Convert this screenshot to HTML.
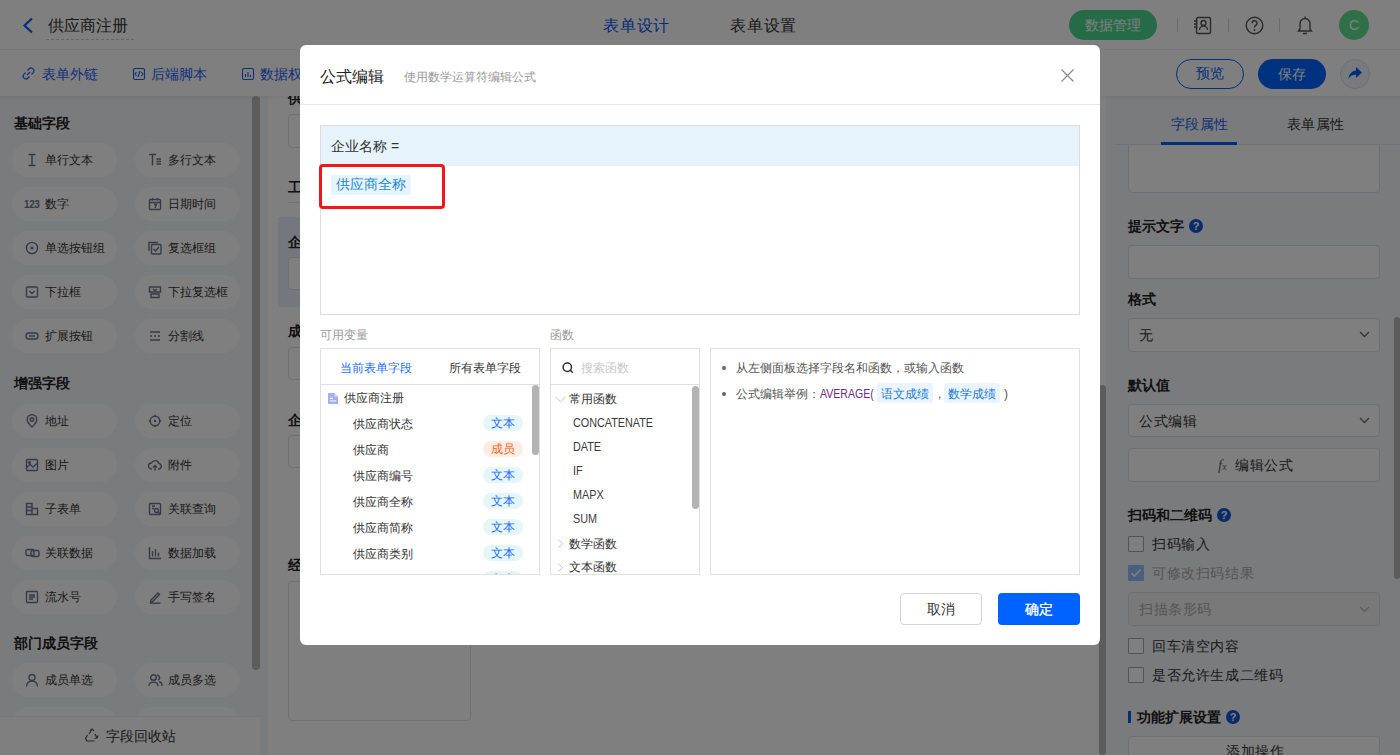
<!DOCTYPE html>
<html><head><meta charset="utf-8"><style>
*{box-sizing:border-box;margin:0;padding:0}
html,body{width:1400px;height:755px;overflow:hidden}
body{font-family:"Liberation Sans",sans-serif;font-size:14px;color:#333;background:#fff;position:relative}
.a,.m{position:absolute;white-space:nowrap}
svg{display:block}
#hdr{position:absolute;left:0;top:0;width:1400px;height:50px;background:#fff;border-bottom:1px solid #eef0f3}
#tb{position:absolute;left:0;top:50px;width:1400px;height:46px;background:#fff}
#tbs{position:absolute;left:0;top:96px;width:1400px;height:4px;background:linear-gradient(rgba(0,0,0,.05),rgba(0,0,0,0))}
#lp{position:absolute;left:0;top:96px;width:260px;height:659px;background:#f4f6fa}
#gut{position:absolute;left:260px;top:96px;width:8px;height:659px;background:#f4f6fa}
#cv{position:absolute;left:268px;top:96px;width:831px;height:659px;background:#fff}
#rp{position:absolute;left:1106px;top:96px;width:294px;height:659px;background:#f4f6fa}
.pill{position:absolute;width:105px;height:34px;border-radius:17px;background:#fff}
.pill svg{position:absolute;left:13px;top:10px}
.pill .t{position:absolute;left:33px;top:0;line-height:35px;font-size:12px;color:#333;white-space:nowrap}
.grp{position:absolute;left:14px;font-size:14px;line-height:18px;font-weight:bold;color:#222;white-space:nowrap}
.lbl{position:absolute;font-size:14px;line-height:18px;font-weight:bold;color:#222;white-space:nowrap}
.inp{position:absolute;border:1px solid #dcdfe4;border-radius:4px;background:#fff}
.hq{position:absolute;width:14px;height:14px;border-radius:7px;background:#1557d6;color:#fff;font-size:11px;line-height:14px;text-align:center;font-weight:bold}
.cb{position:absolute;left:1128px;width:16px;height:16px;border:1px solid #a3a7b3;border-radius:1px;background:#fff}
#mask{position:absolute;left:0;top:0;width:1400px;height:755px;background:rgba(0,0,0,.5)}
#modal{position:absolute;left:300px;top:45px;width:800px;height:600px;background:#fff;border-radius:6px}
.box{position:absolute;border:1px solid #e2e2e2;background:#fff}
</style></head><body>
<div id="lp"></div><div id="gut"></div><div id="cv"></div><div id="rp"></div>
<div class="grp" style="top:114px">基础字段</div>
<div class="pill" style="left:12px;top:143px"><svg width="14" height="14" viewBox="0 0 14 14" fill="none" stroke="#6d7589" stroke-width="1.4"><path d="M3.5 1.5H10.5M3.5 12.5H10.5M7 1.5V12.5" stroke-width="1.5"/></svg><div class="t">单行文本</div></div>
<div class="pill" style="left:135px;top:143px"><svg width="14" height="14" viewBox="0 0 14 14" fill="none" stroke="#6d7589" stroke-width="1.4"><path d="M1 1.5H8M4.5 1.5V12.5M8.5 6H13M8.5 8.5H13M8.5 11H13" stroke-width="1.5"/></svg><div class="t">多行文本</div></div>
<div class="pill" style="left:12px;top:187px"><svg width="17" height="14" viewBox="0 0 17 14" style="left:12px"><text x="0" y="10.5" font-family="Liberation Sans" font-size="10" font-weight="bold" letter-spacing="-0.4" fill="#6d7589">123</text></svg><div class="t">数字</div></div>
<div class="pill" style="left:135px;top:187px"><svg width="14" height="14" viewBox="0 0 14 14" fill="none" stroke="#6d7589" stroke-width="1.4"><rect x="1.5" y="2.5" width="11" height="10" rx="1"/><path d="M1.5 5.5H12.5M4.5 1V3.5M9.5 1V3.5M6 7.5H8.5L7 11"/></svg><div class="t">日期时间</div></div>
<div class="pill" style="left:12px;top:231px"><svg width="14" height="14" viewBox="0 0 14 14" fill="none" stroke="#6d7589" stroke-width="1.4"><circle cx="7" cy="7" r="5.6"/><circle cx="7" cy="7" r="1.6" fill="#6d7589" stroke="none"/></svg><div class="t">单选按钮组</div></div>
<div class="pill" style="left:135px;top:231px"><svg width="14" height="14" viewBox="0 0 14 14" fill="none" stroke="#6d7589" stroke-width="1.4"><path d="M1 10V1.5H10"/><rect x="3.5" y="3.5" width="9.5" height="9.5" rx="1"/><path d="M5.5 8L7.6 10L11 6"/></svg><div class="t">复选框组</div></div>
<div class="pill" style="left:12px;top:275px"><svg width="14" height="14" viewBox="0 0 14 14" fill="none" stroke="#6d7589" stroke-width="1.4"><rect x="1.5" y="2" width="11" height="10" rx="1"/><path d="M4.5 6L7 8.5L9.5 6"/></svg><div class="t">下拉框</div></div>
<div class="pill" style="left:135px;top:275px"><svg width="14" height="14" viewBox="0 0 14 14" fill="none" stroke="#6d7589" stroke-width="1.4"><path d="M1.5 2H12.5V7H1.5Z M3 9H11V12.5H3Z"/><path d="M5 4L7 5.5L9 4"/></svg><div class="t">下拉复选框</div></div>
<div class="pill" style="left:12px;top:319px"><svg width="14" height="14" viewBox="0 0 14 14" fill="none" stroke="#6d7589" stroke-width="1.4"><rect x="1" y="4" width="12" height="6" rx="3"/><path d="M4 7H10"/></svg><div class="t">扩展按钮</div></div>
<div class="pill" style="left:135px;top:319px"><svg width="14" height="14" viewBox="0 0 14 14" fill="none" stroke="#6d7589" stroke-width="1.4"><path d="M2 3H12M2 11H12M2 7H4M6 7H8M10 7H12"/></svg><div class="t">分割线</div></div>
<div class="grp" style="top:374px">增强字段</div>
<div class="pill" style="left:12px;top:404px"><svg width="14" height="14" viewBox="0 0 14 14" fill="none" stroke="#6d7589" stroke-width="1.4"><path d="M7 13C7 13 2.2 8.5 2.2 5.5A4.8 4.8 0 0 1 11.8 5.5C11.8 8.5 7 13 7 13Z"/><circle cx="7" cy="5.5" r="1.8"/></svg><div class="t">地址</div></div>
<div class="pill" style="left:135px;top:404px"><svg width="14" height="14" viewBox="0 0 14 14" fill="none" stroke="#6d7589" stroke-width="1.4"><circle cx="7" cy="7" r="4.8"/><circle cx="7" cy="7" r="1.2" fill="#6d7589" stroke="none"/><path d="M7 0.8V3M7 11V13.2M0.8 7H3M11 7H13.2"/></svg><div class="t">定位</div></div>
<div class="pill" style="left:12px;top:448px"><svg width="14" height="14" viewBox="0 0 14 14" fill="none" stroke="#6d7589" stroke-width="1.4"><rect x="1.5" y="1.5" width="11" height="11" rx="1"/><path d="M1.5 9.5L5 6.5L8 9L12.5 5"/><circle cx="4.5" cy="4.5" r="0.9"/></svg><div class="t">图片</div></div>
<div class="pill" style="left:135px;top:448px"><svg width="14" height="14" viewBox="0 0 14 14" fill="none" stroke="#6d7589" stroke-width="1.4"><path d="M4 11H3.5A3 3 0 0 1 3.5 5A4 4 0 0 1 11 5.5A2.8 2.8 0 0 1 11 11H10"/><path d="M7 12.5V7.5M5 9.5L7 7.5L9 9.5"/></svg><div class="t">附件</div></div>
<div class="pill" style="left:12px;top:492px"><svg width="14" height="14" viewBox="0 0 14 14" fill="none" stroke="#6d7589" stroke-width="1.4"><path d="M1.5 1.5H7V12.5H1.5ZM1.5 5H7M1.5 8.5H7M7 6.5H12.5V12.5H7"/></svg><div class="t">子表单</div></div>
<div class="pill" style="left:135px;top:492px"><svg width="14" height="14" viewBox="0 0 14 14" fill="none" stroke="#6d7589" stroke-width="1.4"><rect x="1.5" y="1.5" width="11" height="11" rx="1"/><path d="M4 4H7M4 6.5H6"/><circle cx="8.5" cy="8.5" r="2"/><path d="M10 10L12 12"/></svg><div class="t">关联查询</div></div>
<div class="pill" style="left:12px;top:536px"><svg width="15" height="14" viewBox="0 0 15 14" fill="none" stroke="#6d7589" stroke-width="1.4"><rect x="1" y="3.5" width="8" height="6" rx="1.5"/><rect x="6" y="4.5" width="8" height="6" rx="1.5"/></svg><div class="t">关联数据</div></div>
<div class="pill" style="left:135px;top:536px"><svg width="14" height="14" viewBox="0 0 14 14" fill="none" stroke="#6d7589" stroke-width="1.4"><path d="M1.5 1V12.5H13M4.5 5V10.5M7.5 3V10.5M10.5 6.5V10.5"/></svg><div class="t">数据加载</div></div>
<div class="pill" style="left:12px;top:580px"><svg width="14" height="14" viewBox="0 0 14 14" fill="none" stroke="#6d7589" stroke-width="1.4"><rect x="1.5" y="1.5" width="11" height="11" rx="1"/><path d="M4 5H10M4 7H10M4 9H8"/></svg><div class="t">流水号</div></div>
<div class="pill" style="left:135px;top:580px"><svg width="14" height="14" viewBox="0 0 14 14" fill="none" stroke="#6d7589" stroke-width="1.4"><path d="M3 10L10 3L11.5 4.5L4.5 11.5L2.5 12Z"/><path d="M2 13.2H12.5"/></svg><div class="t">手写签名</div></div>
<div class="grp" style="top:634px">部门成员字段</div>
<div class="pill" style="left:12px;top:663px"><svg width="14" height="14" viewBox="0 0 14 14" fill="none" stroke="#6d7589" stroke-width="1.4"><circle cx="7" cy="4.5" r="3"/><path d="M1.5 13.5A5.5 5.5 0 0 1 12.5 13.5"/></svg><div class="t">成员单选</div></div>
<div class="pill" style="left:135px;top:663px"><svg width="15" height="14" viewBox="0 0 15 14" fill="none" stroke="#6d7589" stroke-width="1.4"><circle cx="5.5" cy="4.5" r="2.8"/><path d="M0.8 13A4.8 4.8 0 0 1 10.2 13"/><path d="M9 2A2.6 2.6 0 0 1 10 7M11 8.5A4.5 4.5 0 0 1 14 13"/></svg><div class="t">成员多选</div></div>
<div class="pill" style="left:12px;top:707px"><svg width="14" height="14" viewBox="0 0 14 14" fill="none" stroke="#6d7589" stroke-width="1.4"><circle cx="7" cy="4.5" r="3"/><path d="M1.5 13.5A5.5 5.5 0 0 1 12.5 13.5"/></svg><div class="t">部门单选</div></div>
<div class="pill" style="left:135px;top:707px"><svg width="15" height="14" viewBox="0 0 15 14" fill="none" stroke="#6d7589" stroke-width="1.4"><circle cx="5.5" cy="4.5" r="2.8"/><path d="M0.8 13A4.8 4.8 0 0 1 10.2 13"/><path d="M9 2A2.6 2.6 0 0 1 10 7M11 8.5A4.5 4.5 0 0 1 14 13"/></svg><div class="t">部门多选</div></div>
<div class="a" style="left:252px;top:96px;width:8px;height:574px;border-radius:4px;background:#b8b8b8"></div>
<div class="a" style="left:0;top:716px;width:260px;height:39px;background:#fff;border-top:1px solid #eceef2"></div>
<svg class="a" style="left:84px;top:728px" width="16" height="15" viewBox="0 0 16 15" fill="none" stroke="#555" stroke-width="1.2"><path d="M6 3L8 1L10 3M8 1L5 6M11 6L13 10M13 10L10.5 10.5M13 10L14 7.5M10.5 13H3L1.5 10.5L3.5 7"/></svg>
<div class="a" style="left:106px;top:727px;font-size:14px;line-height:18px;color:#333">字段回收站</div>
<div class="lbl" style="left:288px;top:89px">供应商状态</div>
<div class="inp" style="left:288px;top:114px;width:400px;height:34px"></div>
<div class="lbl" style="left:288px;top:178px">工商信息</div>
<div class="a" style="left:288px;top:202px;width:790px;height:1px;background:#e5e7eb"></div>
<div class="a" style="left:278px;top:217px;width:810px;height:90px;background:#e9eef8"></div>
<div class="lbl" style="left:288px;top:233px">企业名称</div>
<div class="inp" style="left:288px;top:257px;width:400px;height:33px"></div>
<div class="lbl" style="left:288px;top:322px">成立日期</div>
<div class="inp" style="left:288px;top:347px;width:400px;height:33px"></div>
<div class="lbl" style="left:288px;top:411px">企业类型</div>
<div class="inp" style="left:288px;top:435px;width:400px;height:33px"></div>
<div class="lbl" style="left:288px;top:556px">经营范围</div>
<div class="inp" style="left:288px;top:581px;width:183px;height:140px"></div>
<div class="a" style="left:1099px;top:385px;width:7px;height:370px;border-radius:3.5px;background:#b8b8b8"></div>
<div class="inp" style="left:1128px;top:120px;width:252px;height:73px"></div>
<div class="a" style="left:1106px;top:96px;width:294px;height:48px;background:#f4f6fa"></div>
<div class="a" style="left:1171px;top:115px;font-size:14px;line-height:18px;color:#1a5cf0;letter-spacing:0.4px">字段属性</div>
<div class="a" style="left:1287px;top:115px;font-size:14px;line-height:18px;color:#333;letter-spacing:0.4px">表单属性</div>
<div class="a" style="left:1114px;top:144px;width:286px;height:1px;background:#e3e5ea"></div>
<div class="a" style="left:1161px;top:142px;width:76px;height:3px;background:#0a5cf5"></div>
<div class="lbl" style="left:1128px;top:217px">提示文字</div><div class="hq" style="left:1189px;top:219px">?</div>
<div class="inp" style="left:1128px;top:245px;width:252px;height:34px"></div>
<div class="lbl" style="left:1128px;top:290px">格式</div>
<div class="inp" style="left:1128px;top:318px;width:252px;height:34px"></div><div class="a" style="left:1139px;top:326px;font-size:14px;line-height:18px;color:#333;letter-spacing:0.6px">无</div>
<svg class="a" style="left:1359px;top:331px" width="11" height="7" viewBox="0 0 11 7"><path d="M1 1L5.5 5.5L10 1" stroke="#666" stroke-width="1.3" fill="none"/></svg>
<div class="lbl" style="left:1128px;top:376px">默认值</div>
<div class="inp" style="left:1128px;top:404px;width:252px;height:33px"></div><div class="a" style="left:1139px;top:412px;font-size:14px;line-height:18px;color:#333;letter-spacing:0.6px">公式编辑</div>
<svg class="a" style="left:1359px;top:417px" width="11" height="7" viewBox="0 0 11 7"><path d="M1 1L5.5 5.5L10 1" stroke="#666" stroke-width="1.3" fill="none"/></svg>
<div class="inp" style="left:1128px;top:448px;width:252px;height:34px"></div>
<div class="a" style="left:1218px;top:456px;font-size:15px;line-height:18px;color:#666;font-style:italic;font-family:&quot;Liberation Serif&quot;,serif">f<span style="font-size:10px">x</span></div>
<div class="a" style="left:1235px;top:456px;font-size:14px;line-height:18px;color:#333;letter-spacing:0.6px">编辑公式</div>
<div class="lbl" style="left:1128px;top:506px">扫码和二维码</div><div class="hq" style="left:1217px;top:508px">?</div>
<div class="cb" style="top:536px"></div><div class="a" style="left:1152px;top:535px;font-size:14px;line-height:18px;color:#333;letter-spacing:0.6px">扫码输入</div>
<div class="cb" style="top:565px;background:#90c0ff;border-color:#90c0ff"></div>
<svg class="a" style="left:1130px;top:568px" width="12" height="10" viewBox="0 0 12 10"><path d="M1.5 5L4.5 8L10.5 1.5" stroke="#fff" stroke-width="1.6" fill="none"/></svg>
<div class="a" style="left:1152px;top:564px;font-size:14px;line-height:18px;color:#aaa;letter-spacing:0.6px">可修改扫码结果</div>
<div class="inp" style="left:1128px;top:592px;width:252px;height:34px;background:#f2f3f5"></div><div class="a" style="left:1139px;top:600px;font-size:14px;line-height:18px;color:#aaa;letter-spacing:0.6px">扫描条形码</div>
<svg class="a" style="left:1359px;top:606px" width="11" height="7" viewBox="0 0 11 7"><path d="M1 1L5.5 5.5L10 1" stroke="#bbb" stroke-width="1.3" fill="none"/></svg>
<div class="cb" style="top:638px"></div><div class="a" style="left:1152px;top:637px;font-size:14px;line-height:18px;color:#333;letter-spacing:0.6px">回车清空内容</div>
<div class="cb" style="top:667px"></div><div class="a" style="left:1152px;top:666px;font-size:14px;line-height:18px;color:#333;letter-spacing:0.6px">是否允许生成二维码</div>
<div class="a" style="left:1128px;top:711px;width:3px;height:12px;background:#0a5cf5"></div>
<div class="lbl" style="left:1137px;top:708px">功能扩展设置</div><div class="hq" style="left:1226px;top:710px">?</div>
<div class="inp" style="left:1128px;top:736px;width:252px;height:33px"></div><div class="a" style="left:1226px;top:742px;font-size:14px;line-height:18px;color:#333;letter-spacing:0.6px">添加操作</div>
<div class="a" style="left:1394px;top:317px;width:6px;height:262px;border-radius:3px;background:#b8b8b8"></div>
<div id="hdr"></div><div id="tb"></div><div id="tbs"></div>
<svg class="a" style="left:22px;top:17px" width="12" height="17" viewBox="0 0 12 17"><path d="M10 1.5L2.5 8.5L10 15.5" stroke="#0a5cf5" stroke-width="2.2" fill="none"/></svg>
<div class="a" style="left:48px;top:16px;font-size:16px;line-height:20px;color:#333">供应商注册</div>
<div class="a" style="left:46px;top:39px;width:88px;height:1px;border-top:1px dashed #c8ccd2"></div>
<div class="a" style="left:603px;top:16px;font-size:16px;line-height:20px;color:#0a55f0;letter-spacing:0.8px">表单设计</div>
<div class="a" style="left:730px;top:16px;font-size:16px;line-height:20px;color:#333;letter-spacing:0.8px">表单设置</div>
<div class="a" style="left:1069px;top:10px;width:88px;height:30px;border-radius:15px;background:#4cd690;color:#fff;font-size:14px;line-height:30px;text-align:center">数据管理</div>
<div class="a" style="left:1177px;top:18px;width:1px;height:14px;background:#d5d7dc"></div>
<div class="a" style="left:1228px;top:18px;width:1px;height:14px;background:#d5d7dc"></div>
<div class="a" style="left:1279px;top:18px;width:1px;height:14px;background:#d5d7dc"></div>
<svg class="a" style="left:1193px;top:16px" width="19" height="19" viewBox="0 0 19 19" fill="none" stroke="#555" stroke-width="1.4"><rect x="3.5" y="1.5" width="14" height="16" rx="1.5"/><circle cx="10.5" cy="7" r="2.5"/><path d="M6.5 14A4 4 0 0 1 14.5 14M1 5H4.5M1 8H4.5M1 11H4.5"/></svg>
<svg class="a" style="left:1245px;top:16px" width="19" height="19" viewBox="0 0 19 19" fill="none" stroke="#555" stroke-width="1.4"><circle cx="9.5" cy="9.5" r="8.3"/><path d="M7 7.2A2.5 2.5 0 1 1 10.5 9.5C9.7 9.9 9.5 10.5 9.5 11.5"/><circle cx="9.5" cy="14" r="0.9" fill="#555" stroke="none"/></svg>
<svg class="a" style="left:1297px;top:15px" width="16" height="20" viewBox="0 0 16 20" fill="none" stroke="#555" stroke-width="1.4"><path d="M8 1.5V3M3 14V8.5A5 5 0 0 1 13 8.5V14L14.5 16H1.5L3 14Z M6 18.5H10"/></svg>
<div class="a" style="left:1339px;top:10px;width:30px;height:30px;border-radius:15px;background:#60e090;color:#fff;font-size:14px;line-height:30px;text-align:center">C</div>
<svg class="a" style="left:22px;top:67px" width="13" height="13" viewBox="0 0 13 13" fill="none" stroke="#1d5ef5" stroke-width="1.2"><path d="M5.5 3.5L7 2A2.5 2.5 0 0 1 11 5.8L9.5 7.3M7.5 9.5L6 11A2.5 2.5 0 0 1 2 7.2L3.5 5.7M4.8 8.2L8.2 4.8"/></svg>
<div class="a" style="left:42px;top:65px;font-size:14px;line-height:18px;color:#1d5ef5">表单外链</div>
<svg class="a" style="left:131.5px;top:67px" width="14" height="14" viewBox="0 0 14 14" fill="none" stroke="#1d5ef5" stroke-width="1.1"><rect x="1.5" y="1.5" width="11" height="11" rx="1.5"/><path d="M4.5 5L3 7L4.5 9M9.5 5L11 7L9.5 9M8 4L6 10"/></svg>
<div class="a" style="left:151px;top:65px;font-size:14px;line-height:18px;color:#1d5ef5">后端脚本</div>
<svg class="a" style="left:240.5px;top:67px" width="14" height="14" viewBox="0 0 14 14" fill="none" stroke="#1d5ef5" stroke-width="1.1"><rect x="1.5" y="1.5" width="11" height="11" rx="1.5"/><path d="M4.5 10V7M7 10V5M9.5 10V8"/></svg>
<div class="a" style="left:260px;top:65px;font-size:14px;line-height:18px;color:#1d5ef5">数据权限</div>
<div class="a" style="left:1176px;top:59px;width:68px;height:30px;border-radius:15px;border:1.5px solid #0a5cf5;color:#0a5cf5;font-size:14px;line-height:27px;text-align:center">预览</div>
<div class="a" style="left:1258px;top:59px;width:68px;height:30px;border-radius:15px;background:#0064fe;color:#fff;font-size:14px;line-height:30px;text-align:center">保存</div>
<div class="a" style="left:1340px;top:59px;width:30px;height:30px;border-radius:15px;background:#f2f5fc;border:1px solid #d3dcef"></div>
<svg class="a" style="left:1347px;top:65px" width="16" height="16" viewBox="0 0 16 16"><path d="M9 2L15 7.5L9 13V9.8C5.5 9.8 3 10.8 1.5 14C1.8 9.2 4.5 6 9 5.5Z" fill="#0a5cf5"/></svg>
<div id="mask"></div>
<div id="modal">
  <div class="m" style="left:20px;top:22px;font-size:16px;line-height:20px;color:#222">公式编辑</div>
  <div class="m" style="left:104px;top:24px;font-size:12px;line-height:16px;color:#999">使用数学运算符编辑公式</div>
  <svg class="m" style="left:760px;top:23px" width="15" height="15" viewBox="0 0 15 15"><path d="M1.5 1.5L13.5 13.5M13.5 1.5L1.5 13.5" stroke="#8c8c8c" stroke-width="1.3" fill="none"/></svg>
  <div class="m" style="left:0;top:59px;width:800px;height:1px;background:#e8e8e8"></div>

  <!-- formula editor -->
  <div class="box" style="left:20px;top:80px;width:760px;height:190px;border-color:#dcdcdc"></div>
  <div class="m" style="left:21px;top:81px;width:758px;height:40px;background:#e6f3fd"></div>
  <div class="m" style="left:31px;top:92px;font-size:14px;line-height:18px;color:#333">企业名称 =</div>
  <div class="m" style="left:31px;top:130px;width:80px;height:20px;background:#e8f4fd;border-radius:2px"></div>
  <div class="m" style="left:36px;top:130px;font-size:14px;line-height:18px;color:#1a8ad4">供应商全称</div>
  <div class="m" style="left:19px;top:119px;width:126px;height:45px;border:3px solid #f5141a;border-radius:4px"></div>

  <!-- labels -->
  <div class="m" style="left:20px;top:282px;font-size:12px;line-height:16px;color:#999">可用变量</div>
  <div class="m" style="left:250px;top:282px;font-size:12px;line-height:16px;color:#999">函数</div>

  <!-- variables box -->
  <div class="box" style="left:20px;top:303px;width:220px;height:227px;border-color:#e0e0e0;overflow:hidden">
    <div class="m" style="left:19px;top:11px;font-size:12px;line-height:16px;color:#1f6bff">当前表单字段</div>
    <div class="m" style="left:128px;top:11px;font-size:12px;line-height:16px;color:#333">所有表单字段</div>
    <div class="m" style="left:0;top:35px;width:220px;height:1px;background:#e0e0e0"></div>
    <svg class="m" style="left:7px;top:44px" width="10" height="11" viewBox="0 0 10 11"><path d="M0 0H6.5L10 3.5V11H0Z" fill="#a2b0fb"/><path d="M6.6 0.2V3.4H9.8Z" fill="#dfe4ff"/><path d="M2 5.3H5M2 7.9H8" stroke="#fff" stroke-width="1"/></svg>
    <div class="m" style="left:23px;top:41px;font-size:12px;line-height:16px;color:#333">供应商注册</div>
    <div class="m" style="left:32px;top:67px;font-size:12px;line-height:16px;color:#333">供应商状态</div>
    <div class="m" style="left:162px;top:66px;width:40px;height:16px;border-radius:8px;background:#e4f6f7;text-align:center;font-size:12px;line-height:16px;color:#1f6bff">文本</div>
    <div class="m" style="left:32px;top:93px;font-size:12px;line-height:16px;color:#333">供应商</div>
    <div class="m" style="left:162px;top:92px;width:40px;height:16px;border-radius:8px;background:#ffece3;text-align:center;font-size:12px;line-height:16px;color:#f0661e">成员</div>
    <div class="m" style="left:32px;top:119px;font-size:12px;line-height:16px;color:#333">供应商编号</div>
    <div class="m" style="left:162px;top:118px;width:40px;height:16px;border-radius:8px;background:#e4f6f7;text-align:center;font-size:12px;line-height:16px;color:#1f6bff">文本</div>
    <div class="m" style="left:32px;top:145px;font-size:12px;line-height:16px;color:#333">供应商全称</div>
    <div class="m" style="left:162px;top:144px;width:40px;height:16px;border-radius:8px;background:#e4f6f7;text-align:center;font-size:12px;line-height:16px;color:#1f6bff">文本</div>
    <div class="m" style="left:32px;top:171px;font-size:12px;line-height:16px;color:#333">供应商简称</div>
    <div class="m" style="left:162px;top:170px;width:40px;height:16px;border-radius:8px;background:#e4f6f7;text-align:center;font-size:12px;line-height:16px;color:#1f6bff">文本</div>
    <div class="m" style="left:32px;top:197px;font-size:12px;line-height:16px;color:#333">供应商类别</div>
    <div class="m" style="left:162px;top:196px;width:40px;height:16px;border-radius:8px;background:#e4f6f7;text-align:center;font-size:12px;line-height:16px;color:#1f6bff">文本</div>
    <div class="m" style="left:162px;top:222px;width:40px;height:16px;border-radius:8px;background:#e4f6f7;text-align:center;font-size:12px;line-height:16px;color:#1f6bff">文本</div>
    <div class="m" style="left:211px;top:36px;width:7px;height:70px;border-radius:4px;background:#b3b3b3"></div>
  </div>

  <!-- functions box -->
  <div class="box" style="left:250px;top:303px;width:150px;height:227px;border-color:#e0e0e0;overflow:hidden">
    <svg class="m" style="left:11px;top:13px" width="12" height="12" viewBox="0 0 12 12"><circle cx="5.3" cy="5.3" r="4.2" stroke="#333" stroke-width="1.5" fill="none"/><path d="M8.3 8.3L10.8 10.8" stroke="#333" stroke-width="1.6"/></svg>
    <div class="m" style="left:30px;top:11px;font-size:12px;line-height:16px;color:#c9c9c9">搜索函数</div>
    <div class="m" style="left:0;top:35px;width:150px;height:1px;background:#e0e0e0"></div>
    <svg class="m" style="left:4px;top:47px" width="11" height="7" viewBox="0 0 11 7"><path d="M0.5 0.8L5.5 5.8L10.5 0.8" stroke="#c4c4c4" stroke-width="1" fill="none"/></svg>
    <div class="m" style="left:18px;top:42px;font-size:12px;line-height:16px;color:#333">常用函数</div>
    <div class="m" style="left:22px;top:66px;font-size:12px;line-height:16px;color:#3a3a3a;transform:scaleX(0.9);transform-origin:0 0">CONCATENATE</div>
    <div class="m" style="left:22px;top:90px;font-size:12px;line-height:16px;color:#3a3a3a;transform:scaleX(0.9);transform-origin:0 0">DATE</div>
    <div class="m" style="left:22px;top:114px;font-size:12px;line-height:16px;color:#3a3a3a;transform:scaleX(0.9);transform-origin:0 0">IF</div>
    <div class="m" style="left:22px;top:138px;font-size:12px;line-height:16px;color:#3a3a3a;transform:scaleX(0.9);transform-origin:0 0">MAPX</div>
    <div class="m" style="left:22px;top:162px;font-size:12px;line-height:16px;color:#3a3a3a;transform:scaleX(0.9);transform-origin:0 0">SUM</div>
    <svg class="m" style="left:7px;top:190px" width="5" height="9" viewBox="0 0 5 9"><path d="M0.5 0.5L4.5 4.5L0.5 8.5" stroke="#c4c4c4" stroke-width="1" fill="none"/></svg>
    <div class="m" style="left:18px;top:187px;font-size:12px;line-height:16px;color:#333">数学函数</div>
    <svg class="m" style="left:7px;top:214px" width="5" height="9" viewBox="0 0 5 9"><path d="M0.5 0.5L4.5 4.5L0.5 8.5" stroke="#c4c4c4" stroke-width="1" fill="none"/></svg>
    <div class="m" style="left:18px;top:210px;font-size:12px;line-height:16px;color:#333">文本函数</div>
    <div class="m" style="left:141px;top:37px;width:7px;height:123px;border-radius:4px;background:#b3b3b3"></div>
  </div>

  <!-- description box -->
  <div class="box" style="left:410px;top:303px;width:370px;height:227px;border-color:#e0e0e0">
    <div class="m" style="left:11px;top:17px;width:4px;height:4px;border-radius:2px;background:#666"></div>
    <div class="m" style="left:25px;top:11px;font-size:12px;line-height:16px;color:#555">从左侧面板选择字段名和函数，或输入函数</div>
    <div class="m" style="left:11px;top:43px;width:4px;height:4px;border-radius:2px;background:#666"></div>
    <div class="m" style="left:25px;top:37px;font-size:12px;line-height:16px;color:#555">公式编辑举例：</div>
    <div class="m" style="left:109px;top:37px;font-size:12px;line-height:16px;color:#6b2a8a;transform:scaleX(0.88);transform-origin:0 0">AVERAGE(</div>
    <div class="m" style="left:166px;top:34px;width:56px;height:20px;border-radius:3px;background:#eaf4fd"></div>
    <div class="m" style="left:170px;top:37px;font-size:12px;line-height:16px;color:#1a7ad4">语文成绩</div>
    <div class="m" style="left:227px;top:37px;font-size:12px;line-height:16px;color:#555">,</div>
    <div class="m" style="left:233px;top:34px;width:56px;height:20px;border-radius:3px;background:#eaf4fd"></div>
    <div class="m" style="left:237px;top:37px;font-size:12px;line-height:16px;color:#1a7ad4">数学成绩</div>
    <div class="m" style="left:293px;top:37px;font-size:12px;line-height:16px;color:#555">)</div>
  </div>

  <!-- buttons -->
  <div class="m" style="left:600px;top:548px;width:82px;height:32px;border:1px solid #d3d3d3;border-radius:4px;text-align:center;line-height:30px;font-size:14px;color:#333">取消</div>
  <div class="m" style="left:698px;top:548px;width:82px;height:32px;border-radius:4px;background:#0062ff;text-align:center;line-height:32px;font-size:14px;color:#fff;font-weight:normal;-webkit-text-stroke:0.3px #fff">确定</div>
</div>


</body></html>
